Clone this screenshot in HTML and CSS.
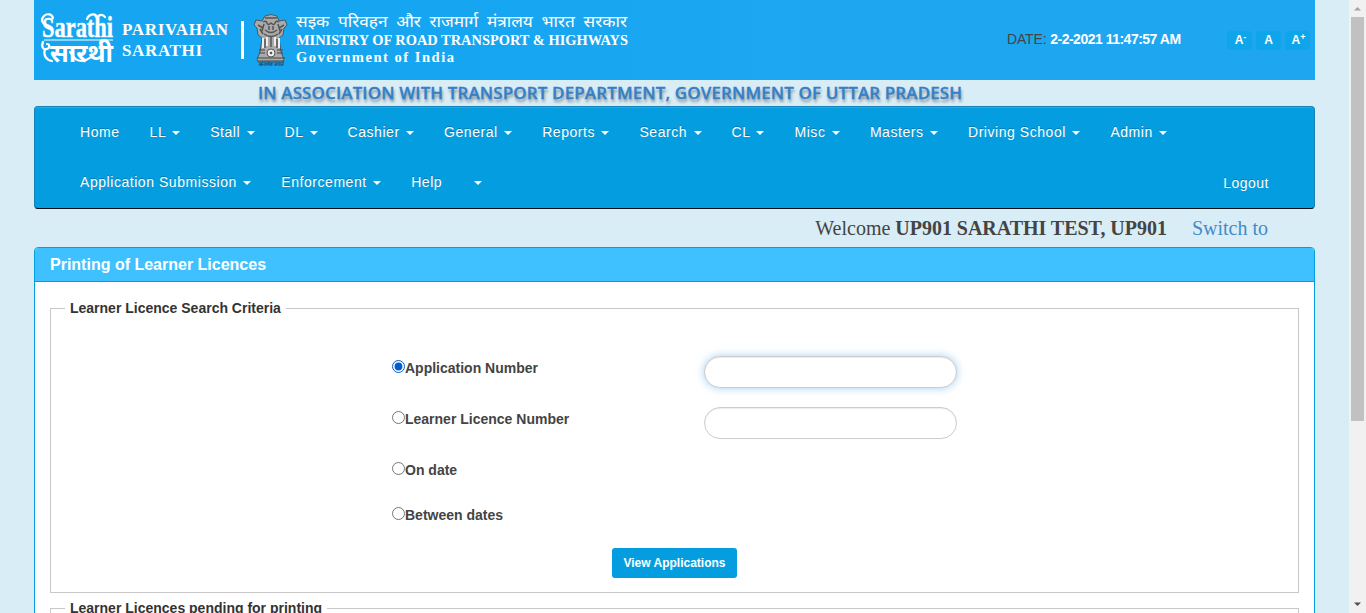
FILE: index.html
```html
<!DOCTYPE html>
<html lang="en">
<head>
<meta charset="utf-8">
<title>Parivahan Sarathi</title>
<link rel="stylesheet" href="styles.css">
</head>
<body>
<div class="page">
  <header class="banner">
    <svg class="brand" width="620" height="80" viewBox="34 0 620 80">
      <g class="wordmark">
        <text x="42" y="37" class="mark-latin" textLength="71" lengthAdjust="spacingAndGlyphs">Sarathi</text>
        <text x="50" y="62" class="mark-hindi" textLength="63" lengthAdjust="spacingAndGlyphs">सारथी</text>
        <path class="swash" d="M53 18c-1-4-6-5-9-2-3 3-2 6 0 8M87 19c1-4 8-7 10-2M97 18c2-4 6-4 8-1M43 42c-2 5 0 8 4 7 3-1 3-5 0-5M45 49c-2 6 1 11 7 12M70 52c4 4 4 9 12 9 5 0 6-3 10-4"/>
        <path d="M44 40h69" stroke="#fff" stroke-width="1.2"/>
      </g>
      <g class="serif">
        <text x="122" y="35" font-size="17" textLength="106">PARIVAHAN</text>
        <text x="122" y="56" font-size="17" textLength="80">SARATHI</text>
      </g>
      <rect x="241" y="21" width="3" height="38" fill="#fff"/>
      <g class="emblem">
        <path d="M265 16q6-3 12 0l2 5 6-1 2 5-3 3-1 7-4 3 2 14 2 5q2 3 0 5h-25q-2-2 0-5l2-5 2-14-4-3-1-7-3-3 2-5 6 1z" fill="#aaa" stroke="#444" stroke-width=".8"/>
        <path d="M265 18h12M263 22q3-2 4 1t4 0q3 3 4 0t4-1M264 24l-2 7M278 24l2 7M258 25l5 3M284 25l-5 3M260 29l3 5M282 29l-3 5M265 30q6 5 12 0M264 34q7 5 14 0M269 26v4M273 26v4" fill="none" stroke="#555" stroke-width="1.5"/>
        <path d="M263 38v10M267 37v9M275 37v9M279 38v10" stroke="#eee" stroke-width="2"/>
        <path d="M265 39v9M271 37v10M277 39v9M259 50h6M277 50h6M259 53h6M277 53h6M257 58h28M258 61h26" fill="none" stroke="#444" stroke-width="1.2"/>
        <circle cx="271" cy="53" r="4" fill="#eee" stroke="#555"/>
        <circle cx="271" cy="53" r="1.3" fill="#555"/>
        <text x="259" y="66" font-size="5" font-weight="bold" textLength="25" lengthAdjust="spacingAndGlyphs" fill="#174768">सत्यमेव जयते</text>
      </g>
      <text x="296" y="27" class="hindi" textLength="331" lengthAdjust="spacingAndGlyphs">सइक परिवहन और राजमार्ग मंत्रालय भारत सरकार</text>
      <g class="serif">
        <text x="296" y="45" font-size="14" textLength="332" lengthAdjust="spacingAndGlyphs">MINISTRY OF ROAD TRANSPORT &amp; HIGHWAYS</text>
        <text x="296" y="62" font-size="14.5" textLength="158">Government of India</text>
      </g>
    </svg>
    <div class="date"><span class="date-label">DATE:</span> <b>2-2-2021 11:47:57 AM</b></div>
    <div class="sizes"><span class="size">A<sup>-</sup></span><span class="size">A</span><span class="size">A<sup>+</sup></span></div>
  </header>
  <div class="association">IN ASSOCIATION WITH TRANSPORT DEPARTMENT, GOVERNMENT OF UTTAR PRADESH</div>
  <nav class="navbar">
    <ul class="menu">
      <li>Home</li>
      <li>LL <i class="caret"></i></li>
      <li>Stall <i class="caret"></i></li>
      <li>DL <i class="caret"></i></li>
      <li>Cashier <i class="caret"></i></li>
      <li>General <i class="caret"></i></li>
      <li>Reports <i class="caret"></i></li>
      <li>Search <i class="caret"></i></li>
      <li>CL <i class="caret"></i></li>
      <li>Misc <i class="caret"></i></li>
      <li>Masters <i class="caret"></i></li>
      <li>Driving School <i class="caret"></i></li>
      <li>Admin <i class="caret"></i></li>
    </ul>
    <ul class="menu">
      <li>Application Submission <i class="caret"></i></li>
      <li>Enforcement <i class="caret"></i></li>
      <li>Help</li>
      <li><i class="caret"></i></li>
      <li class="logout">Logout</li>
    </ul>
  </nav>
  <div class="welcome"><span>Welcome <b>UP901 SARATHI TEST, UP901</b></span><a class="switch">Switch to</a></div>
  <main class="panel">
    <h1 class="panel-title">Printing of Learner Licences</h1>
    <div class="panel-body">
      <fieldset class="group criteria">
        <legend>Learner Licence Search Criteria</legend>
        <div class="row"><label><input type="radio" name="by" checked>Application Number</label><input type="text" class="field active"></div>
        <div class="row"><label><input type="radio" name="by">Learner Licence Number</label><input type="text" class="field"></div>
        <div class="row"><label><input type="radio" name="by">On date</label></div>
        <div class="row last"><label><input type="radio" name="by">Between dates</label></div>
        <button class="view">View Applications</button>
      </fieldset>
      <fieldset class="group pending">
        <legend>Learner Licences pending for printing</legend>
      </fieldset>
    </div>
  </main>
</div>
<aside class="scrollbar">
  <svg width="17" height="17"><path d="M5 10.5h7L8.500 7z" fill="#a3a3a3"/></svg>
  <div class="thumb"></div>
  <svg class="down" width="17" height="17"><path d="M5 6.500h7L8.500 10z" fill="#505050"/></svg>
</aside>
</body>
</html>
```
FILE: styles.css
```css
* { box-sizing: border-box; }
body {
  margin: 0;
  height: 613px;
  overflow: hidden;
  display: flex;
  justify-content: space-between;
  background: #d9edf6;
  color: #444;
  font: 14px/20px "Liberation Sans", Arial, sans-serif;
}
.page { width: 1281px; height: 613px; margin-left: 34px; overflow: hidden; }
.banner {
  height: 80px;
  display: flex;
  align-items: center;
  background: linear-gradient(90deg, #16a6f1 0 35%, #1ea6f1 60%);
}
.brand { flex: none; fill: #fff; }
.mark-latin { font: bold 29px "Liberation Serif", serif; stroke: #fff; stroke-width: .4px; }
.mark-hindi { font: bold 25px "Noto Sans", "Noto Sans Devanagari", sans-serif; }
.swash { fill: none; stroke: #fff; stroke-width: 2.2px; stroke-linecap: round; }
.hindi { font: 16.5px "Noto Sans", "Noto Sans Devanagari", sans-serif; word-spacing: 4px; }
.serif { font-family: "Liberation Serif", serif; font-weight: bold; }
.date { margin: -3px 0 0 353px; width: 220px; font-size: 14px; white-space: nowrap; letter-spacing: -.15px; }
.date b { color: #fff; letter-spacing: -.5px; }
.sizes { display: flex; gap: 4px; margin-top: 1px; }
.size {
  width: 25px;
  height: 19px;
  border-radius: 4px;
  background: #0fa5eb;
  color: #fff;
  font: bold 12px/19px "Liberation Sans", sans-serif;
  text-align: center;
}
.size:first-child, .size:last-child { padding-left: 2px; }
.size sup { font-size: 9px; line-height: 0; vertical-align: 4px; }
.association {
  height: 26px;
  padding-left: 224px;
  color: #337fc9;
  font: 600 17px/26px "Open Sans", sans-serif;
  letter-spacing: .12px;
  text-shadow: 1px 3px 3px rgba(0, 0, 0, .4);
  white-space: nowrap;
  -webkit-text-stroke: .3px #337fc9;
}
.navbar {
  height: 103px;
  padding: 0 30px;
  border: 1px solid #1581b9;
  border-bottom-color: #001018;
  border-radius: 4px;
  background: #049ee0;
  box-shadow: inset 0 1px 0 rgba(255, 255, 255, .15);
}
.menu { display: flex; margin: 0; padding: 0; list-style: none; }
.menu li {
  padding: 15px;
  color: #fff;
  letter-spacing: .55px;
  text-shadow: 0 -1px 0 rgba(0, 0, 0, .25);
  white-space: nowrap;
}
.caret {
  display: inline-block;
  margin-left: 2px;
  vertical-align: middle;
  border: 4px solid transparent;
  border-top-color: #fff;
  border-bottom: 0;
}
.menu .logout { margin-left: auto; padding-top: 16px; padding-bottom: 14px; letter-spacing: .5px; }
.welcome {
  height: 38px;
  display: flex;
  justify-content: flex-end;
  gap: 25px;
  padding-right: 47px;
  font: 20px/38px "Liberation Serif", serif;
}
.welcome b { letter-spacing: -.03px; }
.switch { color: #428bca; }
.panel {
  height: 400px;
  border: 1px solid #049ee0;
  border-radius: 4px;
  background: #fff;
  overflow: hidden;
}
.panel-title {
  height: 34px;
  margin: 0;
  padding-left: 15px;
  border-bottom: 1px solid #1b93d6;
  background: #40c1ff;
  color: #fff;
  font: bold 16px/33px "Liberation Sans", sans-serif;
}
.panel-body { padding: 16px 15px 0; }
.group { margin: 0 0 5px; padding: 0; border: 1px solid #c8c8c8; }
.group legend {
  margin-left: 14px;
  padding: 0 5px;
  color: #333;
  font-weight: bold;
}
.criteria { height: 295px; }
.row {
  display: flex;
  align-items: flex-start;
  height: 51px;
  padding-left: 341px;
}
.row:nth-of-type(1) { margin-top: 38px; }
.row label { width: 312px; padding-top: 2px; font-weight: bold; }
.row input[type="radio"] { width: 13px; height: 13px; margin: 0; vertical-align: 0; accent-color: #005fcc; }
.row.last { height: 45px; }
.row:nth-of-type(3) { height: 45px; }
.field {
  width: 253px;
  height: 32px;
  border: 1px solid #ccc;
  border-radius: 16px;
  box-shadow: inset 0 1px 1px rgba(0, 0, 0, .075);
}
.field.active { box-shadow: inset 0 1px 1px rgba(0, 0, 0, .075), 0 0 8px rgba(102, 175, 233, .6); }
.view {
  display: block;
  width: 125px;
  height: 30px;
  margin-left: 561px;
  border: 0;
  border-radius: 3px;
  background: #049ee0;
  color: #fff;
  font: bold 12px "Liberation Sans", sans-serif;
}
.pending { height: 100px; }
.scrollbar { width: 17px; display: flex; flex-direction: column; align-items: center; background: #f1f1f1; }
.thumb { width: 13px; height: 404px; background: #c1c1c1; }
.down { margin-top: auto; }
```
